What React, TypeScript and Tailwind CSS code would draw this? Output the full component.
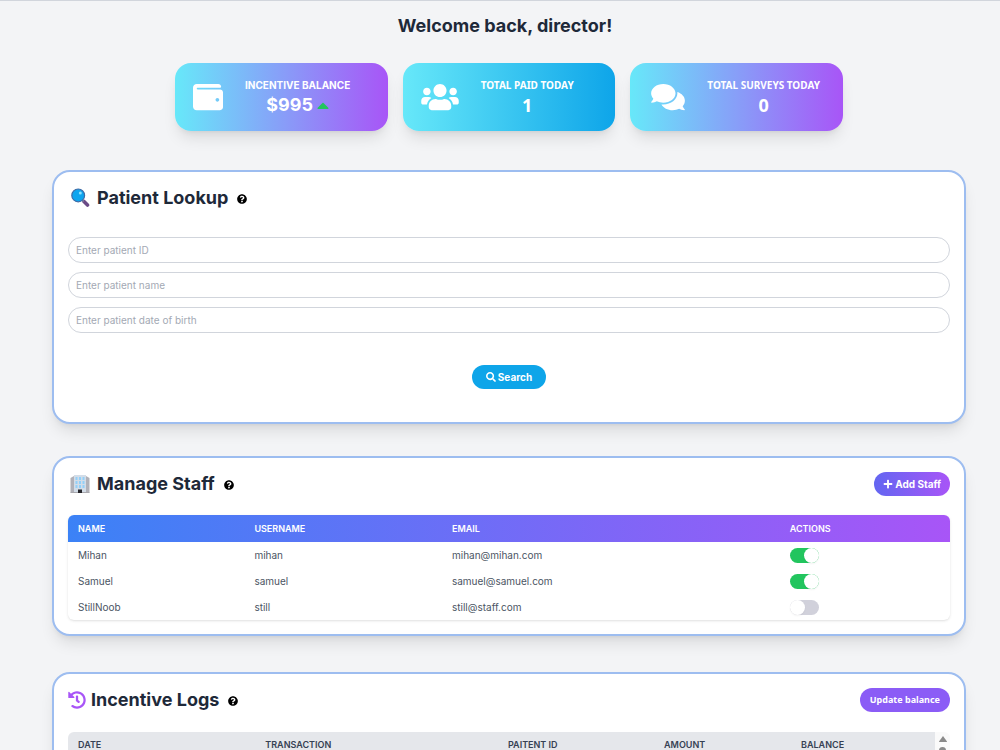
import { useState } from "react";
import type { ReactNode } from "react";
import clsx from "clsx";
import {
  FaCaretUp,
  FaComments,
  FaHistory,
  FaPlus,
  FaQuestionCircle,
  FaSearch,
  FaUsers,
  FaWallet,
} from "react-icons/fa";

const lookupFields = [
  { id: "patient-id", placeholder: "Enter patient ID" },
  { id: "patient-name", placeholder: "Enter patient name" },
  { id: "patient-dob", placeholder: "Enter patient date of birth" },
];

const initialStaff = [
  { name: "Mihan", username: "mihan", email: "mihan@mihan.com", active: true },
  { name: "Samuel", username: "samuel", email: "samuel@samuel.com", active: true },
  { name: "StillNoob", username: "still", email: "still@staff.com", active: false },
];

function StatCard({
  icon,
  label,
  value,
  className,
}: {
  icon: ReactNode;
  label: string;
  value: ReactNode;
  className?: string;
}) {
  return (
    <div
      className={clsx(
        "flex h-[68px] flex-1 items-center gap-[22px] rounded-2xl bg-linear-to-r/srgb from-[#67e8f9] px-[18px] text-white shadow-lg",
        className
      )}
    >
      {icon}
      <div className="text-center">
        <div className="whitespace-nowrap text-[10px] font-bold leading-4">{label}</div>
        <div className="flex items-center justify-center gap-1 text-lg font-bold leading-6">{value}</div>
      </div>
    </div>
  );
}

function Panel({
  icon,
  title,
  action,
  children,
}: {
  icon: ReactNode;
  title: string;
  action?: ReactNode;
  children: ReactNode;
}) {
  return (
    <section className="rounded-[18px] border-2 border-[#9dbdf0] bg-white p-[14px] shadow-lg">
      <div className="flex h-6 items-center justify-between">
        <h2 className="flex items-center text-lg font-bold text-gray-800">
          {icon}
          {title}
          <button type="button" aria-label={`About ${title}`} className="ml-[9px] pt-[2px] text-black">
            <FaQuestionCircle size={10} className="block" />
          </button>
        </h2>
        {action}
      </div>
      {children}
    </section>
  );
}

function MagnifierIcon() {
  return (
    <svg viewBox="0 0 20 20" className="ml-[2px] mr-[7px] size-5" aria-hidden="true">
      <path d="M14 13.500l3.500 3.500" stroke="#6a4a86" strokeWidth="3.6" strokeLinecap="round" />
      <path d="M11.5 11.5l2.2 2" stroke="#7d7d9b" strokeWidth="1.8" />
      <circle cx="8.200" cy="7.400" r="6.4" fill="#0da5ef" stroke="#3f6ba6" strokeWidth="1.2" />
      <circle cx="10.300" cy="5" r="1.500" fill="#8be0ff" />
    </svg>
  );
}

function OfficeIcon() {
  return (
    <svg viewBox="0 0 20 20" className="ml-[2px] mr-[7px] size-5" aria-hidden="true">
      <path d="M.5 4L4 2v16.500H.5zM16 2l3.500 2v14.500H16z" fill="#b1b1b8" />
      <path d="M4 1h12v17.500H4z" fill="#d3dde8" />
      <path d="M.5 18h19v1H.5z" fill="#a8a8ae" />
      <path
        d="M5.500 3h2v3h-2zM9 3h2v3H9zM12.500 3h2v3h-2zM5.500 7h2v3h-2zM9 7h2v3H9zM12.500 7h2v3h-2zM5.500 11h2v3h-2zM9 11h2v3H9zM12.500 11h2v3h-2z"
        fill="#93d0f8"
      />
      <path d="M8 15.500h4V19H8z" fill="#26262b" />
    </svg>
  );
}

export default function App() {
  const [staff, setStaff] = useState(initialStaff);

  const toggleStaff = (username: string) =>
    setStaff((rows) => rows.map((r) => (r.username === username ? { ...r, active: !r.active } : r)));

  return (
    <main className="h-screen overflow-hidden border-t border-gray-300 bg-[#f3f4f6] pl-[52px] pr-[34px] font-['Inter',sans-serif] text-gray-800">
      <h1 className="-ml-2 pt-[13px] text-center text-lg font-bold leading-6">Welcome back, director!</h1>

      <div className="mx-auto mt-[25px] flex max-w-[668px] gap-[15px]">
        <StatCard
          icon={<FaWallet className="size-[30px]" />}
          label="INCENTIVE BALANCE"
          value={
            <>
              $995
              <FaCaretUp className="h-[19px] w-3 text-[#22c55e]" />
            </>
          }
          className="to-[#a855f7]"
        />
        <StatCard
          icon={<FaUsers className="h-[30px] w-[38px]" />}
          label="TOTAL PAID TODAY"
          value="1"
          className="to-[#0ea5e9] font-['Noto_Sans',sans-serif]"
        />
        <StatCard
          icon={<FaComments className="ml-[3px] h-[30px] w-[34px]" />}
          label="TOTAL SURVEYS TODAY"
          value="0"
          className="to-[#a855f7] font-['Noto_Sans',sans-serif]"
        />
      </div>

      <div className="mt-[39px] flex flex-col gap-8">
        <Panel icon={<MagnifierIcon />} title="Patient Lookup">
          <form className="pb-[19px] pt-[27px]" onSubmit={(e) => e.preventDefault()}>
            <div className="flex flex-col gap-[9px]">
              {lookupFields.map((field) => (
                <input
                  key={field.id}
                  id={field.id}
                  type="text"
                  aria-label={field.placeholder}
                  placeholder={field.placeholder}
                  className="h-[26px] w-full rounded-full border border-gray-300 bg-white px-[7px] text-[10px] placeholder:text-[#a3a9b4]"
                />
              ))}
            </div>
            <button
              type="submit"
              className="mx-auto mt-8 flex h-6 items-center gap-[2px] rounded-full bg-[#0ea5e9] px-[14px] text-[10px] font-bold text-white"
            >
              <FaSearch size={10} />
              Search
            </button>
          </form>
        </Panel>

        <Panel
          icon={<OfficeIcon />}
          title="Manage Staff"
          action={
            <button
              type="button"
              className="flex h-6 items-center gap-[2px] rounded-full bg-linear-to-r/srgb from-[#6366f1] to-[#a855f7] px-[9px] text-[10px] font-bold text-white"
            >
              <FaPlus size={10} />
              Add Staff
            </button>
          }
        >
          <div className="mt-[19px] overflow-hidden rounded-md shadow-sm">
            <table className="w-full table-fixed text-left text-[10px]">
              <thead>
                <tr className="h-[27px] bg-linear-to-r/srgb from-[#3b82f6] to-[#a855f7] text-[9px] text-white">
                  <th className="w-[20%] px-[10px] font-semibold">NAME</th>
                  <th className="w-[22.4%] px-[10px] font-semibold">USERNAME</th>
                  <th className="w-[38.3%] px-[10px] font-semibold">EMAIL</th>
                  <th className="px-[10px] font-semibold">ACTIONS</th>
                </tr>
              </thead>
              <tbody className="text-[#4b5563]">
                {staff.map((row) => (
                  <tr key={row.username} className="h-[26px]">
                    <td className="px-[10px]">{row.name}</td>
                    <td className="px-[10px]">{row.username}</td>
                    <td className="px-[10px]">{row.email}</td>
                    <td className="px-[10px]">
                      <input
                        type="checkbox"
                        role="switch"
                        aria-label={`${row.name} active`}
                        checked={row.active}
                        onChange={() => toggleStaff(row.username)}
                        className="block h-[15px] w-[29px] appearance-none rounded-full bg-[#d1d1db] before:block before:size-[15px] before:rounded-full before:bg-white before:shadow-xs checked:bg-[#22c55e] checked:before:ml-[14px]"
                      />
                    </td>
                  </tr>
                ))}
              </tbody>
            </table>
          </div>
        </Panel>

        <div className="mt-1">
          <Panel
            icon={<FaHistory size={18} className="mr-[5px] text-[#a855f7]" />}
            title="Incentive Logs"
            action={
              <button
                type="button"
                className="h-6 rounded-full bg-[#8b5cf6] px-[10px] font-['Noto_Sans',sans-serif] text-[9px] font-bold text-white"
              >
                Update balance
              </button>
            }
          >
            <div className="mt-5 flex h-40 overflow-hidden rounded-md">
              <div className="flex-1">
                <table className="w-full table-fixed text-left text-[9px]">
                  <thead>
                    <tr className="h-[26px] bg-gray-200 text-gray-700">
                      <th className="w-[21.6%] px-[10px] font-semibold">DATE</th>
                      <th className="w-[28%] px-[10px] font-semibold">TRANSACTION</th>
                      <th className="w-[18%] px-[10px] font-semibold">PAITENT ID</th>
                      <th className="w-[15.8%] px-[10px] font-semibold">AMOUNT</th>
                      <th className="px-[10px] font-semibold">BALANCE</th>
                    </tr>
                  </thead>
                </table>
              </div>
              {/* scrollbar */}
              <div className="flex w-[15px] flex-col items-center bg-[#fafafa] pt-1">
                <svg viewBox="0 0 8 6" className="h-[6px] w-2" aria-hidden="true">
                  <path d="M4 0l4 5.500q0 .5-.5.5h-7Q0 6 0 5.500z" fill="#8a8a8a" />
                </svg>
                <div className="mt-[5px] h-16 w-[7px] rounded-full bg-[#8a8a8a]" />
              </div>
            </div>
          </Panel>
        </div>
      </div>
    </main>
  );
}
